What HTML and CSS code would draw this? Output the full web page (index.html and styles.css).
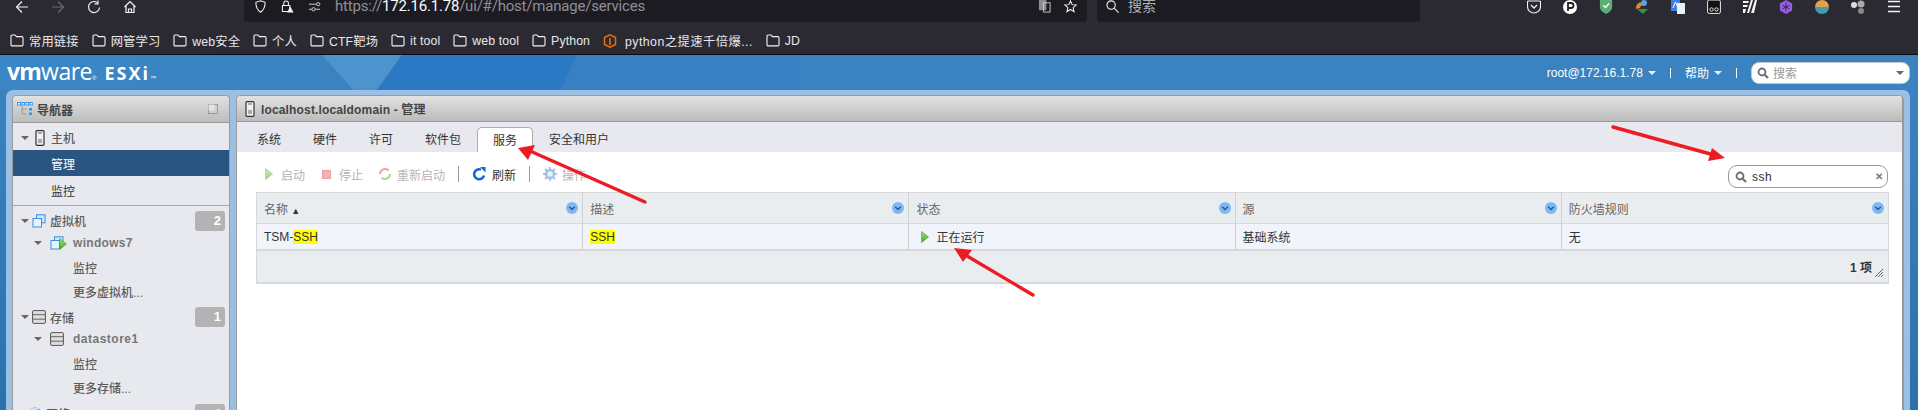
FILE: index.html
```html
<!DOCTYPE html>
<html lang="zh-CN">
<head>
<meta charset="utf-8">
<title>ESXi</title>
<link rel="stylesheet" href="styles.css">
</head>
<body>
<svg class="defs" width="0" height="0" aria-hidden="true">
  <defs>
    <linearGradient id="playfill" x1="0" y1="0" x2="0" y2="1"><stop offset="0" stop-color="#a6e36e"/><stop offset="1" stop-color="#3fa82f"/></linearGradient>
  </defs>
  <symbol id="folder" viewBox="0 0 14 13"><path d="M1 2.200c0-.7.4-1.200 1.100-1.200h2.900l1.400 1.600h5.500c.7 0 1.100.5 1.100 1.200v6.900c0 .7-.4 1.200-1.100 1.200H2.100c-.7 0-1.100-.5-1.100-1.200z" fill="none" stroke="#f4f4f6" stroke-width="1.100"/></symbol>
  <symbol id="srv" viewBox="0 0 10 16"><rect x="1" y=".7" width="8" height="14.600" rx="1" fill="#f0f0f0" stroke="#333" stroke-width="1.200"/><path d="M3 3h4M3 10h4M3 12h4" stroke="#666"/></symbol>
  <symbol id="db" viewBox="0 0 14 14"><rect x=".6" y=".6" width="12.800" height="12.800" rx="1.200" fill="#ddd" stroke="#555"/><path d="M1 4.700h12M1 9.200h12" stroke="#666"/></symbol>
  <symbol id="vm" viewBox="0 0 14 14"><rect x="4.500" y=".8" width="8.500" height="8" fill="#cfe6fb" stroke="#3a8ee0"/><rect x="1" y="4.500" width="8.500" height="8.500" fill="#e7f3fd" stroke="#3a8ee0"/></symbol>
  <symbol id="chev" viewBox="0 0 12 12"><circle cx="6" cy="6" r="6" fill="#7db9f6"/><path d="M3.200 4.800 6 7.600l2.800-2.800" fill="none" stroke="#34577d" stroke-width="1.400"/></symbol>
  <symbol id="play" viewBox="0 0 8 12"><path d="M.6.500 7.500 6 .6 11.500z" fill="url(#playfill)" stroke="#3f9a2a" stroke-width=".6"/></symbol>
  <symbol id="mag" viewBox="0 0 12 12"><circle cx="5" cy="5" r="3.500" fill="none" stroke="#6f6f6f" stroke-width="1.800"/><path d="m7.700 7.700 3.300 3.300" stroke="#6f6f6f" stroke-width="2.200"/></symbol>
</svg>

<div class="page">
  <header class="chrome">
    <div class="toolbar">
      <div class="nav-btns">
        <svg class="tb-i" viewBox="0 0 14 14"><path d="M13 7H2M7 1.500 1.500 7 7 12.500" fill="none" stroke="#f2f2f4" stroke-width="1.200"/></svg>
        <svg class="tb-i" viewBox="0 0 14 14"><path d="M1 7h11M7 1.500 12.500 7 7 12.500" fill="none" stroke="#6b6a72" stroke-width="1.200"/></svg>
        <svg class="tb-i" viewBox="0 0 14 14"><path d="M12.500 7.500A5.500 5.500 0 1 1 10 2.400M11 .5v3.400H7.600" fill="none" stroke="#f2f2f4" stroke-width="1.200"/></svg>
        <svg class="tb-i" viewBox="0 0 14 14"><path d="M1.500 7 7 1.500 12.500 7M3 6v6.500h8V6M5.500 12.500V9h3v3.500" fill="none" stroke="#f2f2f4" stroke-width="1.200"/></svg>
      </div>
      <div class="urlbar">
        <svg class="u-i" viewBox="0 0 12 14"><path d="M6 .8 11 2.500c0 5-1.500 8.500-5 10.700C2.500 11 1 7.500 1 2.500z" fill="none" stroke="#f2f2f4" stroke-width="1.100"/></svg>
        <svg class="u-i" viewBox="0 0 14 14"><path d="M3 6V3.500a2.500 2.500 0 0 1 5 0V6M1.500 6h8v6.500h-8z" fill="none" stroke="#f2f2f4" stroke-width="1.100"/><path d="m10 7 3.500 6.500h-7z" fill="#f2f2f4"/></svg>
        <svg class="u-i u-i-perm" viewBox="0 0 14 14"><path d="M1 4.500h8M1 10h3M8 10h5" stroke="#d8d8dc"/><circle cx="11" cy="4.500" r="1.800" fill="none" stroke="#d8d8dc"/><circle cx="6" cy="10" r="1.800" fill="none" stroke="#d8d8dc"/></svg>
        <span class="url">https://<b>172.16.1.78</b>/ui/#/host/manage/services</span>
        <svg class="u-i u-tr" viewBox="0 0 14 14"><rect x="1" y="0" width="8" height="11" fill="#8e8e92"/><rect x="6" y="3" width="7" height="10" fill="none" stroke="#c8c8cc"/></svg>
        <svg class="u-i u-star" viewBox="0 0 14 14"><path d="m7 1 1.800 4 4.200.4-3.200 2.800 1 4.300L7 10.200 3.200 12.500l1-4.300L1 5.400 5.200 5z" fill="none" stroke="#f2f2f4" stroke-width="1.100"/></svg>
      </div>
      <div class="searchbar">
        <svg class="u-i u-mag" viewBox="0 0 14 14"><circle cx="5.500" cy="5.500" r="4.500" fill="none" stroke="#f2f2f4" stroke-width="1.200"/><path d="m9 9 4.500 4.500" stroke="#f2f2f4" stroke-width="1.200"/></svg>
        <span class="search-ph">搜索</span>
      </div>
      <div class="ext">
        <svg class="ex" viewBox="0 0 14 14"><path d="M1.500 1h11c.6 0 1 .4 1 1v4.500a6.500 6.500 0 0 1-13 0V2c0-.6.400-1 1-1z" fill="#2b2a33" stroke="#f4f4f4" stroke-width="1.100"/><path d="m4 5 3 3 3-3" fill="none" stroke="#f4f4f4" stroke-width="1.300"/></svg>
        <svg class="ex" viewBox="0 0 14 14"><circle cx="7" cy="7" r="7" fill="#fff"/><path d="M5 11V3h3a2.500 2.500 0 0 1 0 5H5" fill="none" stroke="#222" stroke-width="1.800"/></svg>
        <svg class="ex" viewBox="0 0 14 16"><path d="M0 0h14v8c0 3.500-3 6-7 8-4-2-7-4.500-7-8z" fill="#5dae72"/><path d="m4 6 2.500 2.500L10.500 4" fill="none" stroke="#fff" stroke-width="1.500"/></svg>
        <svg class="ex" viewBox="0 0 14 14"><path d="M1 9a6 6 0 0 1 6-7l2 3a4 4 0 0 0-4 3z" fill="#d8872a"/><circle cx="9" cy="3" r="3" fill="#5aa0e8"/><path d="M2 9h11l-5 5z" fill="#2f9a3a"/></svg>
        <svg class="ex" viewBox="0 0 14 14"><rect width="9" height="11" fill="#3f7fe8"/><rect x="6" y="3" width="8" height="11" fill="#e8f0fb"/><path d="m2 8 2.500-6L7 8" fill="none" stroke="#fff"/></svg>
        <svg class="ex" viewBox="0 0 14 14"><rect x=".6" y="0" width="12.800" height="13.400" rx="1.500" fill="#111" stroke="#eee"/><circle cx="4.500" cy="9.500" r="1.700" fill="none" stroke="#eee"/><circle cx="9.500" cy="9.500" r="1.700" fill="none" stroke="#eee"/></svg>
        <svg class="ex" viewBox="0 0 14 14"><path d="M0 1h6L5 3H0zM0 5h5L4 7H0zM0 9h3l-1 4H0zM8 0h2L6 13H4zM12 0h2l-3 13H8z" fill="#f4f4f4"/></svg>
        <svg class="ex" viewBox="0 0 14 16"><path d="M7 0l7 4v8l-7 4-7-4V4z" fill="#9a5ce6"/><path d="M7 3v10M3 6l8 4M11 6l-8 4" stroke="#2b2a33"/></svg>
        <svg class="ex" viewBox="0 0 16 16"><path d="M0 8a8 8 0 0 1 16 0z" fill="#e4a04a"/><path d="M0 8h16a8 8 0 0 1-16 0z" fill="#3aa0b8"/></svg>
        <svg class="ex" viewBox="0 0 14 14"><circle cx="3" cy="5" r="3" fill="#ddd"/><circle cx="10" cy="4" r="3.500" fill="#aaa"/><circle cx="10" cy="11" r="3" fill="#888"/></svg>
        <svg class="ex" viewBox="0 0 14 14"><path d="M1 1.500h12M1 6.500h12M1 11.500h12" stroke="#f4f4f4" stroke-width="1.300"/></svg>
      </div>
    </div>
    <nav class="bookmarks">
      <a class="bm"><svg class="fd"><use href="#folder"/></svg>常用链接</a>
      <a class="bm"><svg class="fd"><use href="#folder"/></svg>网管学习</a>
      <a class="bm"><svg class="fd"><use href="#folder"/></svg>web安全</a>
      <a class="bm"><svg class="fd"><use href="#folder"/></svg>个人</a>
      <a class="bm"><svg class="fd"><use href="#folder"/></svg>CTF靶场</a>
      <a class="bm"><svg class="fd"><use href="#folder"/></svg>it tool</a>
      <a class="bm"><svg class="fd"><use href="#folder"/></svg>web tool</a>
      <a class="bm"><svg class="fd"><use href="#folder"/></svg>Python</a>
      <a class="bm bm-long"><svg class="fd fd-o" viewBox="0 0 13 14"><path d="M6.500.8 12 3.500v7L6.500 13.200 1 10.500v-7z" fill="none" stroke="#e8720c" stroke-width="1.500"/><path d="M6.500 4v7" stroke="#e8720c" stroke-width="1.600"/></svg>python之提速千倍爆...</a>
      <a class="bm"><svg class="fd"><use href="#folder"/></svg>JD</a>
    </nav>
  </header>

  <div class="esxi">
    <div class="head">
      <svg class="facets" viewBox="0 0 1918 35" preserveAspectRatio="none" aria-hidden="true">
        <polygon points="322,0 402,0 377,35 353,35" fill="#4d93cd"/>
        <polygon points="402,0 577,0 561,35 377,35" fill="#2b79c4"/>
        <polygon points="577,0 800,0 800,35 561,35" fill="#3980c2"/>
      </svg>
      <div class="logo"><span class="vm">vm</span><span class="ware">ware</span><sup class="reg">®</sup><span class="esx">ESXi</span><sup class="tm">™</sup></div>
      <div class="head-right">
        <span class="user">root@172.16.1.78<i class="caret"></i></span>
        <i class="vsep"></i>
        <span class="help">帮助<i class="caret"></i></span>
        <i class="vsep"></i>
        <div class="head-search">
          <svg class="mag"><use href="#mag"/></svg>
          <span class="hs-ph">搜索</span>
          <i class="caret caret-dark"></i>
        </div>
      </div>
    </div>

    <div class="frame">
      <div class="inner">
        <aside class="navp">
          <div class="p-head nav-head">
            <svg class="nav-ico" viewBox="0 0 16 14"><path d="M5 3v9h5M5 7h5" fill="none" stroke="#999"/><rect x=".5" y=".5" width="3" height="2.500" fill="#fff" stroke="#3b96e6"/><rect x="5" y=".5" width="2.500" height="2.500" fill="#fff" stroke="#3b96e6"/><rect x="9" y=".5" width="2.500" height="2.500" fill="#fff" stroke="#3b96e6"/><rect x="12.800" y=".5" width="2.500" height="2.500" fill="#fff" stroke="#3b96e6"/><rect x="12" y="6" width="3" height="2.500" fill="#3b96e6"/><rect x="12" y="10.500" width="3" height="2.500" fill="#3b96e6"/></svg>
            <span class="nav-title">导航器</span>
            <svg class="pin" viewBox="0 0 10 10"><rect x=".5" y=".5" width="9" height="9" fill="#cfcfcf" stroke="#999"/><rect x=".5" y=".5" width="6" height="6" fill="#e2e2e2" stroke="none"/></svg>
          </div>
          <div class="tree">
            <div class="sec">
              <div class="row row-top"><i class="tw"></i><svg class="ic ic-srv"><use href="#srv"/></svg><span>主机</span></div>
              <div class="row row-sub row-active">管理</div>
              <div class="row row-sub row-last">监控</div>
            </div>
            <div class="sec-plain">
              <div class="row row-top"><i class="tw"></i><svg class="ic"><use href="#vm"/></svg><span>虚拟机</span><b class="badge">2</b></div>
              <div class="row row-child"><i class="tw"></i><svg class="ic ic-vm"><use href="#vm"/></svg><svg class="ic-play"><use href="#play"/></svg><span class="latin">windows7</span></div>
              <div class="row row-leaf link">监控</div>
              <div class="row row-leaf">更多虚拟机...</div>
              <div class="row row-top row-store"><i class="tw"></i><svg class="ic"><use href="#db"/></svg><span>存储</span><b class="badge">1</b></div>
              <div class="row row-child"><i class="tw"></i><svg class="ic ic-vm"><use href="#db"/></svg><span class="latin latin-ds">datastore1</span></div>
              <div class="row row-leaf link">监控</div>
              <div class="row row-leaf">更多存储...</div>
              <div class="row row-top"><i class="tw tw-closed"></i><svg class="ic" viewBox="0 0 14 14"><circle cx="7" cy="7" r="6.500" fill="#3a8ee0"/><path d="M2 5a6 4 0 0 1 8-3" stroke="#cfe6fb" stroke-width="2" fill="none"/></svg><span>网络</span><b class="badge">4</b></div>
            </div>
          </div>
        </aside>

        <main class="content">
          <div class="p-head ct-head">
            <svg class="ct-ico"><use href="#srv"/></svg>
            <span class="ct-title">localhost.localdomain - 管理</span>
          </div>
          <div class="tabs">
            <a class="tab">系统</a><a class="tab">硬件</a><a class="tab">许可</a><a class="tab">软件包</a><a class="tab tab-on">服务</a><a class="tab">安全和用户</a>
          </div>
          <div class="pane">
            <div class="actions">
              <div class="btns">
                <span class="btn off"><svg class="b-i"><use href="#play"/></svg>启动</span>
                <span class="btn off"><i class="stop"></i>停止</span>
                <span class="btn off"><svg class="b-i b-r" viewBox="0 0 12 12"><path d="M1 6a5 5 0 0 1 8.500-3.500" fill="none" stroke="#e4644f" stroke-width="2.200"/><path d="M11 6a5 5 0 0 1-8.500 3.500" fill="none" stroke="#63c13f" stroke-width="2.200"/></svg>重新启动</span>
                <i class="bsep"></i>
                <span class="btn"><svg class="b-i b-f" viewBox="0 0 14 14"><path d="M12 8.500A5 5 0 1 1 9 2.600" fill="none" stroke="#1467cc" stroke-width="2.600"/><path d="M8 0h5.500v5.500z" fill="#1467cc"/></svg>刷新</span>
                <i class="bsep"></i>
                <span class="btn off"><svg class="b-i b-g" viewBox="0 0 14 14"><circle cx="7" cy="7" r="4" fill="#e5edf7" stroke="#8fb3dc" stroke-width="2.400"/><path d="M7 0v2.500M7 11.500V14M0 7h2.500M11.500 7H14M2 2l2 2M10 10l2 2M12 2l-2 2M4 10l-2 2" stroke="#8fb3dc" stroke-width="1.800"/></svg>操作</span>
              </div>
              <div class="filter">
                <svg class="mag"><use href="#mag"/></svg>
                <span class="f-val">ssh</span>
                <span class="f-x">✕</span>
              </div>
            </div>
            <div class="grid">
              <div class="g-row g-head">
                <div class="cell"><span>名称 <small class="sort">▲</small></span><svg class="chev"><use href="#chev"/></svg></div>
                <div class="cell"><span>描述</span><svg class="chev"><use href="#chev"/></svg></div>
                <div class="cell"><span>状态</span><svg class="chev"><use href="#chev"/></svg></div>
                <div class="cell"><span>源</span><svg class="chev"><use href="#chev"/></svg></div>
                <div class="cell"><span>防火墙规则</span><svg class="chev"><use href="#chev"/></svg></div>
              </div>
              <div class="g-row g-body">
                <div class="cell"><span>TSM-<mark>SSH</mark></span></div>
                <div class="cell"><span><mark>SSH</mark></span></div>
                <div class="cell cell-st"><svg class="st"><use href="#play"/></svg><span>正在运行</span></div>
                <div class="cell"><span>基础系统</span></div>
                <div class="cell"><span>无</span></div>
              </div>
              <div class="g-foot"><b>1 项</b><svg class="grip" viewBox="0 0 8 8"><path d="M0 8 8 0M3 8l5-5M6 8l2-2" stroke="#666"/></svg></div>
            </div>
          </div>
        </main>
      </div>
    </div>
  </div>

  <svg class="arrows" viewBox="0 0 1918 410" aria-hidden="true">
    <g fill="#ed1c24">
      <path d="M645 202 530 151" stroke="#ed1c24" stroke-width="3.400" stroke-linecap="round"/>
      <polygon points="518,148 535,145 528,160"/>
      <path d="M1033 295 962 253" stroke="#ed1c24" stroke-width="3.400" stroke-linecap="round"/>
      <polygon points="954,248 972,250 963,262"/>
      <path d="M1613 127 1714 155" stroke="#ed1c24" stroke-width="3.400" stroke-linecap="round"/>
      <polygon points="1725,158 1708,161 1712,148"/>
    </g>
  </svg>
</div>
</body>
</html>
```
FILE: styles.css
```css
* { box-sizing: border-box; }
html, body { margin: 0; padding: 0; height: 410px; overflow: hidden; }
body {
  font-family: "Liberation Sans", "Noto Sans CJK SC", sans-serif;
  font-size: 12px;
  color: #333;
  background: #fff;
}
.defs { position: absolute; }
.page { position: relative; width: 1918px; height: 410px; overflow: hidden; display: flex; flex-direction: column; }

/* browser chrome */
.chrome { height: 55px; background: #2b2a33; border-bottom: 1px solid #0c0c0f; flex: none; }
.toolbar { height: 27px; display: flex; align-items: flex-start; }
.nav-btns { width: 244px; height: 13px; display: flex; align-items: center; padding-left: 15px; gap: 22px; flex: none; }
.tb-i { width: 14px; height: 14px; flex: none; }
.urlbar { width: 843px; height: 22px; background: #1c1b22; border-radius: 0 0 4px 4px; display: flex; align-items: flex-start; padding-left: 10px; flex: none; }
.u-i { width: 13px; height: 13px; flex: none; margin: 0 14px 0 0; }
.u-i-perm { margin-right: 10px; }
.url { font-family: "Roboto", sans-serif; font-size: 15px; line-height: 13px; color: #8f8f94; white-space: nowrap; margin-left: 4px; letter-spacing: -.2px; }
.url b { font-weight: 400; color: #fbfbfe; }
.u-tr { margin-left: auto; margin-right: 13px; }
.u-star { margin-right: 10px; }
.searchbar { width: 323px; height: 22px; margin-left: 10px; background: #1c1b22; border-radius: 0 0 4px 4px; display: flex; align-items: flex-start; padding-left: 9px; flex: none; }
.u-mag { margin-right: 9px; }
.search-ph { font-size: 14px; line-height: 13px; color: #aeaeb2; }
.ext { flex: 1; height: 13px; display: flex; align-items: flex-start; justify-content: flex-end; padding-right: 17px; gap: 22px; }
.ex { width: 14px; height: 14px; flex: none; }
.bookmarks { height: 27px; display: flex; align-items: center; padding-left: 10px; gap: 13px; }
.bm { display: flex; align-items: center; gap: 5px; font-size: 12.300px; letter-spacing: .12px; color: #e8e8ea; white-space: nowrap; }
.bm-long { gap: 8px; letter-spacing: .45px; }
.fd { width: 14px; height: 13px; flex: none; }
.fd-o { height: 14px; }

/* ESXi */
.esxi { flex: 1; display: flex; flex-direction: column; min-height: 0; }
.head { position: relative; height: 35px; flex: none; background: linear-gradient(90deg, #3b87c5, #3a82c0 300px); display: flex; align-items: center; justify-content: space-between; color: #fff; }
.facets { position: absolute; inset: 0; width: 100%; height: 100%; }
.logo { position: relative; padding-left: 7px; display: flex; align-items: baseline; color: #fff; margin-top: -3px; white-space: nowrap; }
.vm { font-family: "Open Sans", sans-serif; font-weight: 700; font-size: 23px; letter-spacing: -.8px; }
.ware { font-family: "Open Sans", sans-serif; font-weight: 400; font-size: 23px; letter-spacing: -.5px; }
.reg, .tm { font-size: 6px; vertical-align: super; line-height: 0; }
.esx { font-family: "Open Sans", sans-serif; font-weight: 700; font-size: 18px; margin-left: 8px; letter-spacing: 2px; }
.head-right { position: relative; display: flex; align-items: center; padding-right: 8px; }
.user, .help { display: flex; align-items: center; white-space: nowrap; color: #fff; font-size: 12px; }
.caret { display: inline-block; width: 0; height: 0; border: 4px solid transparent; border-top: 4px solid #e6eef6; border-bottom: 0; margin-left: 5px; }
.caret-dark { border-top-color: #666; margin-left: auto; margin-right: 5px; }
.vsep { width: 1px; height: 10px; background: #fff; margin: 0 14px; }
.head-search { width: 159px; height: 22px; background: #fff; border: 1px solid #c8c8c8; border-radius: 8px; display: flex; align-items: center; padding-left: 5px; }
.mag { width: 12px; height: 12px; flex: none; }
.hs-ph { margin-left: 4px; color: #999; }

.frame { flex: 1; min-height: 0; background: linear-gradient(#3a82c0, #2b72ad); padding: 0 8px 0 6px; }
.inner { height: 100%; background: #9bc0e3; border-radius: 7px 7px 0 0; padding: 5px 6px 0; display: flex; gap: 6px; }
.navp, .content { background: #e8e9ef; border: 1px solid #9a9a9a; border-bottom: 0; border-radius: 5px 5px 0 0; overflow: hidden; }
.navp { width: 218px; flex: none; }
.content { flex: 1; min-width: 0; border-width: 1px 2px 0 1px; background: #fff; }
.p-head { height: 27px; background: linear-gradient(#e2e2e2, #bcbcbc); border-bottom: 1px solid #9a9a9a; display: flex; align-items: center; }
.nav-head { padding: 0 11px 0 4px; }
.nav-ico { width: 16px; height: 14px; flex: none; }
.nav-title { margin-left: 4px; font-weight: 700; color: #444; }
.pin { width: 10px; height: 10px; margin-left: auto; }

/* tree */
.sec { border-bottom: 1px solid #a6a6a6; }
.row { display: flex; align-items: center; height: 24px; color: #5c5c5c; white-space: nowrap; }
.row-top { height: 27px; padding: 2px 0 0 8px; font-weight: 500; }
.row-sub { height: 26px; padding-left: 38px; color: #333; }
.row-active { background: #2a5580; color: #fff; }
.row-last { height: 29px; }
.row-child { height: 22px; padding: 0 0 2px 21px; }
.row-leaf { padding-left: 60px; font-weight: 500; }
.link { color: #444; font-weight: 400; }
.row-store { height: 26px; }
.tw { width: 0; height: 0; border: 4px solid transparent; border-top: 4px solid #666; border-bottom: 0; flex: none; }
.tw-closed { border: 4px solid transparent; border-left: 4px solid #bbb; border-right: 0; }
.ic { width: 14px; height: 14px; margin: 0 4px 0 3px; flex: none; }
.ic-srv { width: 10px; height: 16px; margin: 0 6px 0 6px; }
.ic-vm { margin: 0 2px 0 8px; }
.ic-play { width: 8px; height: 12px; margin: 2px 0 0 -7px; flex: none; }
.latin { margin-left: 6px; font-weight: 700; letter-spacing: .3px; color: #777; }
.latin-ds { letter-spacing: .5px; margin-left: 7px; }
.badge { margin-left: auto; margin-right: 4px; width: 30px; height: 20px; border-radius: 3px; background: #b3b3b3; color: #fff; text-align: right; padding-right: 4px; line-height: 20px; font-size: 13px; }

/* content */
.ct-head { height: 26px; padding-left: 8px; }
.ct-ico { width: 10px; height: 16px; flex: none; }
.ct-title { margin-left: 6px; font-weight: 700; color: #444; font-size: 12px; letter-spacing: .15px; }
.tabs { height: 30px; background: #e8e9ef; display: flex; align-items: flex-end; padding-left: 4px; }
.tab { height: 25px; padding: 0 16px; line-height: 26px; color: #333; white-space: nowrap; }
.tab-on { background: #fff; border: 1px solid #aaa; border-bottom: 0; border-radius: 5px 5px 0 0; padding: 0 15px; }
.pane { padding: 0 13px 0 19px; }
.actions { height: 40px; display: flex; align-items: center; justify-content: space-between; padding: 4px 1px 0 0; }
.btns { display: flex; align-items: center; padding-left: 9px; }
.btn { display: flex; align-items: center; color: #333; white-space: nowrap; margin-right: 17px; }
.off { color: #b5b5b5; }
.btn:nth-child(2) { margin-right: 16px; }
.btn:nth-child(3), .btn:nth-child(5) { margin-right: 13px; }
.b-i { width: 8px; height: 12px; margin-right: 8px; opacity: .55; flex: none; }
.b-r { width: 12px; margin-right: 6px; }
.b-f { width: 14px; height: 14px; opacity: 1; margin-right: 6px; }
.b-g { width: 14px; height: 14px; opacity: .8; margin-right: 5px; }
.stop { width: 9px; height: 9px; background: #f5b0b0; border: 1px solid #eaa0a0; margin-right: 8px; flex: none; }
.bsep { width: 1px; height: 16px; background: #999; margin-right: 13px; }
.filter { width: 160px; height: 23px; margin-top: 5px; border: 1px solid #999; border-radius: 9px; background: #fff; display: flex; align-items: center; padding: 0 4px 0 6px; }
.f-val { margin-left: 5px; letter-spacing: .5px; color: #333; }
.f-x { margin-left: auto; color: #777; font-size: 10px; font-weight: 700; }
.grid { border: 1px solid #d8d8d8; border-bottom: 2px solid #d8d8d8; }
.g-row { display: grid; grid-template-columns: repeat(5, 1fr); }
.g-head { height: 31px; background: #eaedf0; border-bottom: 1px solid #d8d8d8; }
.g-body { height: 25px; background: #f1f5fb; }
.cell { display: flex; align-items: center; justify-content: space-between; padding: 0 4px 0 7px; border-right: 1px solid #d0d0d0; min-width: 0; white-space: nowrap; }
.cell:last-child { border-right: 0; }
.g-head .cell { color: #666; font-size: 12px; }
.sort { font-size: 9px; color: #333; }
.chev { width: 12px; height: 12px; flex: none; }
mark { background: #ffff00; color: #333; }
.cell-st { justify-content: flex-start; padding-left: 12px; }
.st { width: 8px; height: 12px; margin-right: 7px; flex: none; }
.g-foot { height: 33px; background: #eaedf0; border-top: 2px solid #d8d8d8; display: flex; align-items: center; justify-content: flex-end; padding-right: 16px; position: relative; }
.g-foot b { color: #333; }
.grip { position: absolute; right: 5px; bottom: 5px; width: 8px; height: 8px; }

.arrows { position: absolute; inset: 0; width: 1918px; height: 410px; pointer-events: none; }
```
